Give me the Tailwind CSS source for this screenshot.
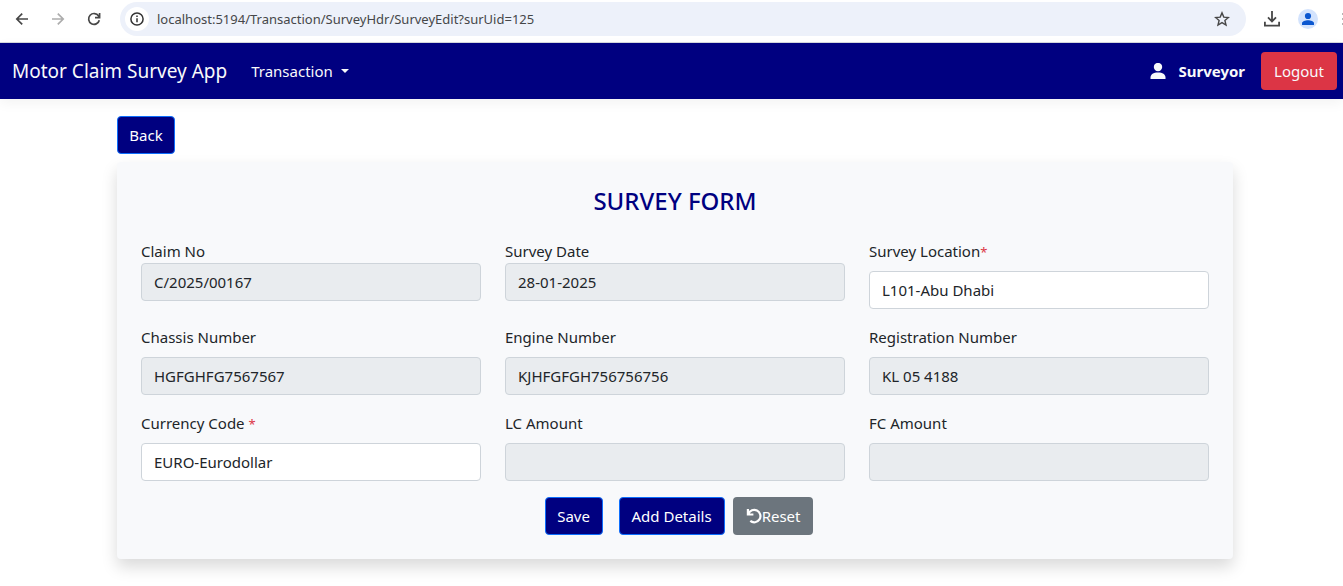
<!DOCTYPE html>
<html lang="en">
<head>
<meta charset="utf-8">
<title>Motor Claim Survey App</title>
<script src="https://cdn.jsdelivr.net/npm/@tailwindcss/browser@4"></script>
</head>
<body class="min-h-screen overflow-x-hidden bg-white font-['Segoe_UI','Noto_Sans',sans-serif] text-[15px] leading-6 text-[#212529]">

<!-- Browser toolbar -->
<div class="flex h-[43px] items-start border-b border-[#d5d9df] pt-[2px] pl-[14px]">
  <div class="flex h-[34px] items-center gap-5 pr-[18px]">
    <button aria-label="Back" class="size-4 text-[#474747]"><svg viewBox="0 0 16 16" class="size-4" fill="none" stroke="currentColor" stroke-width="1.7"><path d="M14 8H3M8.2 2.6 2.8 8l5.4 5.4"/></svg></button>
    <button aria-label="Forward" class="size-4 text-[#adadad]"><svg viewBox="0 0 16 16" class="size-4" fill="none" stroke="currentColor" stroke-width="1.7"><path d="M2 8h11M7.8 2.6 13.2 8l-5.4 5.4"/></svg></button>
    <button aria-label="Reload" class="size-4 text-[#474747]"><svg viewBox="0 0 16 16" class="size-4" fill="none" stroke="currentColor" stroke-width="1.7"><path d="M13.3 9.2A5.4 5.4 0 1 1 12.6 5L13.4 6.2M13.6 2v4.6H9"/></svg></button>
  </div>
  <div class="flex h-[34px] flex-1 items-center rounded-full bg-[#edf1fa] pr-4 pl-[5px]">
    <button aria-label="Site information" class="flex size-6 items-center justify-center rounded-full bg-white text-[#333]"><svg viewBox="0 0 16 16" class="size-4" fill="none" stroke="currentColor" stroke-width="1.5"><circle cx="8" cy="8" r="6.1"/><path d="M8 7.3v3.9M8 4.6v1.5"/></svg></button>
    <input aria-label="Address" value="localhost:5194/Transaction/SurveyHdr/SurveyEdit?surUid=125" class="ml-2 min-w-0 flex-1 bg-transparent text-[13px] text-[#454749] outline-none">
    <button aria-label="Bookmark" class="size-4 text-[#474747]"><svg viewBox="0 0 16 16" class="size-4" fill="none" stroke="currentColor" stroke-width="1.4"><path d="m8 1.9 1.8 4.2 4.6.4-3.5 3 1.1 4.5L8 11.6 4 14l1.1-4.5-3.5-3 4.6-.4z"/></svg></button>
  </div>
  <div class="flex h-[34px] items-center">
    <button aria-label="Downloads" class="ml-[18px] size-4 text-[#474747]"><svg viewBox="0 0 16 16" class="size-4" fill="none" stroke="currentColor" stroke-width="1.8"><path d="M8 0v10M4 6.4l4 4 4-4M.9 10.8v3.8h14.2v-3.8"/></svg></button>
    <button aria-label="Profile" class="ml-[18px] size-5 text-[#0b57d0]"><svg viewBox="0 0 20 20" class="size-5"><circle cx="10" cy="10" r="10" fill="#d3e3fd"/><circle cx="10" cy="7" r="3.1" fill="currentColor"/><path d="M4 16v-1.800c0-2 3.400-3 6-3s6 1 6 3V16z" fill="currentColor"/></svg></button>
    <button aria-label="Menu" class="ml-[23px] h-4 w-[2px] text-[#b5b5b5]"><svg viewBox="0 0 2 16" class="h-4 w-[2px]" fill="currentColor"><path d="M1 2h1v2H1zM1 7h1v2H1zM1 12h1v2H1z"/></svg></button>
  </div>
</div>

<!-- Site navigation -->
<nav class="flex h-14 items-center bg-[#000080] pr-[6px] pl-3 text-[#f8f9fa] shadow-[0_4px_12px_rgba(0,0,0,0.05)]">
  <a href="#" class="text-[19px] whitespace-nowrap">Motor Claim Survey App</a>
  <button class="ml-6 flex items-center gap-2">Transaction
    <svg viewBox="0 0 8 4" class="h-1 w-2" fill="currentColor"><path d="M0 0h8L4 4z"/></svg>
  </button>
  <div class="ml-auto flex items-center">
    <svg viewBox="0 0 16 16" class="size-4" fill="currentColor"><circle cx="8" cy="4" r="4.200"/><path d="M.5 16v-1.500C.5 11.300 3.500 9.400 8 9.400s7.500 1.900 7.500 5.100V16z"/></svg>
    <span class="ml-3 font-bold">Surveyor</span>
    <button class="ml-4 h-[38px] rounded bg-[#dc3545] px-[13px] text-[#f8f9fa]">Logout</button>
  </div>
</nav>

<main class="pt-[17px] pl-[7px]">
  <div class="mx-auto max-w-[1140px] px-3">
    <button class="block h-[38px] min-w-[58px] rounded border border-[#0d6efd] bg-[#000080] px-[11px] text-white">Back</button>

    <form class="mt-2 rounded bg-[#f8f9fb] p-6 shadow-[0_8px_16px_rgba(0,0,0,0.15)]">
      <h1 class="text-center text-2xl leading-[29px] font-medium text-[#000080]">SURVEY FORM</h1>

      <div class="mt-6 grid grid-cols-3 gap-x-6 gap-y-4">
        <div class="flex flex-col">
          <label for="claim">Claim No</label>
          <input id="claim" readonly value="C/2025/00167" class="h-[38px] w-full rounded border border-[#ced4da] bg-[#e9ecef] px-3">
        </div>
        <div class="flex flex-col">
          <label for="date">Survey Date</label>
          <input id="date" readonly value="28-01-2025" class="h-[38px] w-full rounded border border-[#ced4da] bg-[#e9ecef] px-3">
        </div>
        <div class="flex flex-col gap-2">
          <label for="location">Survey Location<span class="text-[13px] leading-none text-[#dc3545]">*</span></label>
          <input id="location" value="L101-Abu Dhabi" class="h-[38px] w-full rounded border border-[#ced4da] bg-white px-3">
        </div>
        <div class="flex flex-col gap-2">
          <label for="chassis">Chassis Number</label>
          <input id="chassis" readonly value="HGFGHFG7567567" class="h-[38px] w-full rounded border border-[#ced4da] bg-[#e9ecef] px-3">
        </div>
        <div class="flex flex-col gap-2">
          <label for="engine">Engine Number</label>
          <input id="engine" readonly value="KJHFGFGH756756756" class="h-[38px] w-full rounded border border-[#ced4da] bg-[#e9ecef] px-3">
        </div>
        <div class="flex flex-col gap-2">
          <label for="registration">Registration Number</label>
          <input id="registration" readonly value="KL 05 4188" class="h-[38px] w-full rounded border border-[#ced4da] bg-[#e9ecef] px-3">
        </div>
        <div class="flex flex-col gap-2">
          <label for="currency">Currency Code <span class="text-[13px] leading-none text-[#dc3545]">*</span></label>
          <input id="currency" value="EURO-Eurodollar" class="h-[38px] w-full rounded border border-[#ced4da] bg-white px-3">
        </div>
        <div class="flex flex-col gap-2">
          <label for="lc">LC Amount</label>
          <input id="lc" readonly class="h-[38px] w-full rounded border border-[#ced4da] bg-[#e9ecef] px-3">
        </div>
        <div class="flex flex-col gap-2">
          <label for="fc">FC Amount</label>
          <input id="fc" readonly class="h-[38px] w-full rounded border border-[#ced4da] bg-[#e9ecef] px-3">
        </div>
      </div>

      <div class="mt-4 flex justify-center pl-2">
        <button type="submit" class="h-[38px] min-w-[58px] rounded border border-[#0d6efd] bg-[#000080] px-[11px] text-white">Save</button>
        <button type="button" class="ml-4 h-[38px] rounded border border-[#0d6efd] bg-[#000080] px-3 text-white">Add Details</button>
        <button type="reset" class="ml-2 flex h-[38px] items-center rounded bg-[#6c757d] px-[13px] text-white">
          <svg viewBox="0 0 16 16" class="size-4" fill="none" stroke="currentColor" stroke-width="2.200"><path d="M1.900 1v5.500h5.500M2.400 6A6.200 6.200 0 1 1 4.300 12.900"/></svg>Reset</button>
      </div>
    </form>
  </div>
</main>
</body>
</html>
